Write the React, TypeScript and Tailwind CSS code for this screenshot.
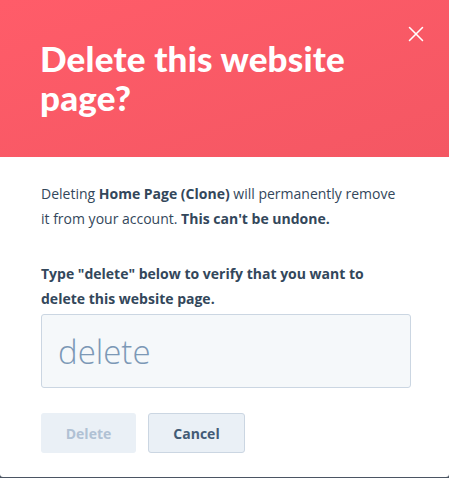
import { X } from 'lucide-react';

export default function App() {
  return (
    <div className="h-[478px] w-[449px] bg-[#4b5563]">
      <div className="flex h-[477px] flex-col overflow-hidden rounded-b-[3px] bg-white">
        <header className="relative h-[157px] shrink-0 bg-gradient-to-br from-[#ff5c69] to-[#f45763] pl-[40px] pt-[39px]">
          <h1 className="font-['Lato',sans-serif] text-[35px] font-black leading-[39px] tracking-[0.2px] text-white">
            Delete this website
            <br />
            page?
          </h1>
          <button className="absolute right-[20px] top-[21px] text-white">
            <X className="h-[26px] w-[26px]" strokeWidth={1.4} />
          </button>
        </header>

        <div className="px-[41px] pt-[24px] font-['Open_Sans',sans-serif] text-[14px] leading-[25px] text-[#33475b]">
          <p>
            Deleting <b className="font-bold">Home Page (Clone)</b> will permanently remove
            <br />
            it from your account. <b className="font-bold">This can't be undone.</b>
          </p>

          <p className="mt-[30px] font-bold">
            Type "delete" below to verify that you want to
            <br />
            delete this website page.
          </p>

          <input
            placeholder="delete"
            className="mt-[3px] block h-[74px] w-[370px] rounded-[3px] border border-[#cbd6e2] bg-[#f5f8fa] px-[16px] text-[33px] font-light text-[#33475b] outline-none placeholder:text-[#7c98b6]"
          />

          <div className="mt-[25px] flex gap-[12px]">
            <button
              disabled
              className="h-[40px] w-[95px] rounded-[3px] bg-[#eaf0f6] text-[14px] font-bold text-[#b0c1d4]"
            >
              Delete
            </button>
            <button className="h-[40px] w-[97px] rounded-[3px] border border-[#cbd6e2] bg-[#eaf0f6] text-[14px] font-bold text-[#425b76]">
              Cancel
            </button>
          </div>
        </div>
      </div>
    </div>
  );
}
